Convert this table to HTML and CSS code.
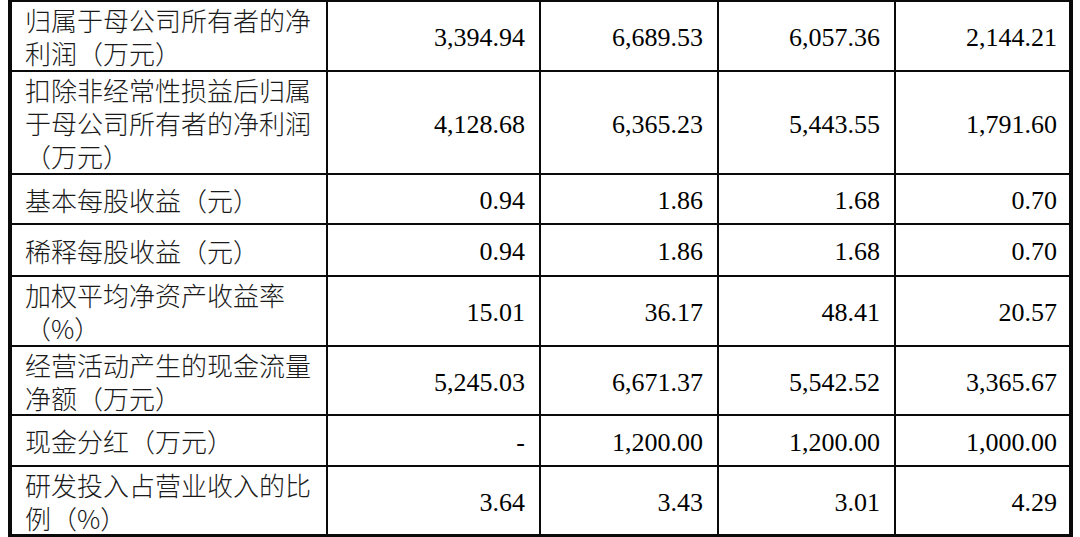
FILE: index.html
```html
<!DOCTYPE html>
<html lang="zh-CN">
<head>
<meta charset="utf-8">
<title>主要财务指标</title>
<link rel="stylesheet" href="styles.css">
</head>
<body>
<table class="fin">
  <colgroup>
    <col class="c-label">
    <col class="c-y1">
    <col class="c-y2">
    <col class="c-y3">
    <col class="c-y4">
  </colgroup>
  <tbody>
    <tr class="h68">
      <td class="label">归属于母公司所有者的净利润（万元）</td>
      <td class="num">3,394.94</td>
      <td class="num">6,689.53</td>
      <td class="num">6,057.36</td>
      <td class="num last">2,144.21</td>
    </tr>
    <tr class="h101">
      <td class="label">扣除非经常性损益后归属于母公司所有者的净利润（万元）</td>
      <td class="num">4,128.68</td>
      <td class="num">6,365.23</td>
      <td class="num">5,443.55</td>
      <td class="num last">1,791.60</td>
    </tr>
    <tr class="h48">
      <td class="label">基本每股收益（元）</td>
      <td class="num">0.94</td>
      <td class="num">1.86</td>
      <td class="num">1.68</td>
      <td class="num last">0.70</td>
    </tr>
    <tr class="h50">
      <td class="label">稀释每股收益（元）</td>
      <td class="num">0.94</td>
      <td class="num">1.86</td>
      <td class="num">1.68</td>
      <td class="num last">0.70</td>
    </tr>
    <tr class="h68">
      <td class="label">加权平均净资产收益率（%）</td>
      <td class="num">15.01</td>
      <td class="num">36.17</td>
      <td class="num">48.41</td>
      <td class="num last">20.57</td>
    </tr>
    <tr class="h67">
      <td class="label">经营活动产生的现金流量净额（万元）</td>
      <td class="num">5,245.03</td>
      <td class="num">6,671.37</td>
      <td class="num">5,542.52</td>
      <td class="num last">3,365.67</td>
    </tr>
    <tr class="h49">
      <td class="label">现金分红（万元）</td>
      <td class="num">-</td>
      <td class="num">1,200.00</td>
      <td class="num">1,200.00</td>
      <td class="num last">1,000.00</td>
    </tr>
    <tr class="h67">
      <td class="label">研发投入占营业收入的比例（%）</td>
      <td class="num">3.64</td>
      <td class="num">3.43</td>
      <td class="num">3.01</td>
      <td class="num last">4.29</td>
    </tr>
  </tbody>
</table>
</body>
</html>
```

FILE: styles.css
```css
html, body {
  margin: 0;
  padding: 0;
  background: #ffffff;
}

body {
  padding-left: 8px;
}

.fin {
  table-layout: fixed;
  width: 1065px;
  border-collapse: separate;
  border-spacing: 2px;
  background: #0a0a0a;
  border-style: solid;
  border-color: #0a0a0a;
  border-width: 0 2px 1px 2px;
}

.c-label { width: 314px; }
.c-y1 { width: 211px; }
.c-y2 { width: 176px; }
.c-y3 { width: 175px; }
.c-y4 { width: 173px; }

.fin td {
  background: #ffffff;
  padding: 0;
  vertical-align: middle;
}

.fin td.label {
  font-family: "Noto Sans CJK SC", "Noto Sans", sans-serif;
  font-weight: 300;
  font-size: 26px;
  line-height: 33px;
  color: #1a1a1a;
  padding-left: 13px;
  text-align: left;
}

.fin td.num {
  font-family: "Liberation Serif", "Times New Roman", serif;
  font-size: 26px;
  line-height: 30px;
  color: #000000;
  text-align: right;
  padding-top: 4px;
  padding-right: 14px;
  white-space: nowrap;
}

.fin td.num.last {
  padding-right: 12px;
}

.h48 td { height: 44px; }
.h49 td { height: 45px; }
.h50 td { height: 46px; }
.h67 td { height: 63px; }
.h68 td { height: 64px; }
.h101 td { height: 97px; }
```
